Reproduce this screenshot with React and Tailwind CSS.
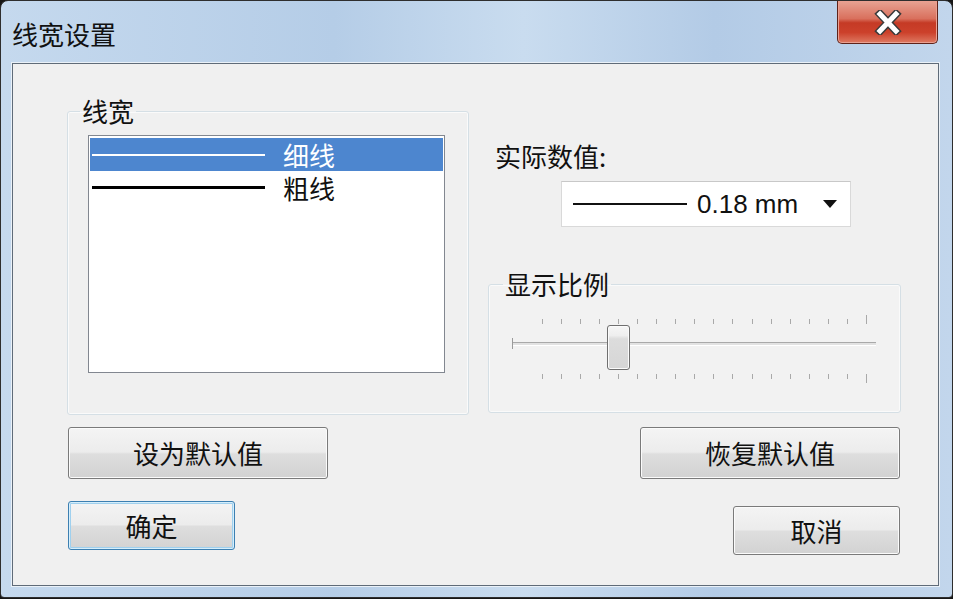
import React from "react";

const cjk = { fontFamily: '"Noto Sans CJK SC", "Noto Sans", sans-serif' };

function Btn({ children, className = "", focused = false }) {
  return (
    <div
      className={
        "flex items-center justify-center rounded-[3px] border text-[26px] leading-none text-[#111] bg-[linear-gradient(to_bottom,#f4f4f4_0%,#ececec_48%,#dedede_52%,#d2d2d2_100%)] " +
        (focused
          ? "border-[#3c7fb1] shadow-[inset_0_0_0_1px_#d6eefb,inset_0_0_0_2px_#9fd0ee]"
          : "border-[#7a7a7a] shadow-[inset_0_0_0_1px_#fbfbfb]") +
        " " +
        className
      }
      style={cjk}
    >
      {children}
    </div>
  );
}

function Ticks({ top }) {
  const n = 18;
  return (
    <div
      className={
        "flex justify-between pl-[30px] pr-[9px] " +
        (top ? "h-[10px] items-end" : "h-[9px] items-start")
      }
    >
      {Array.from({ length: n }).map((_, i) => (
        <div
          key={i}
          className={
            "w-px bg-[#a9a9a9] " + (i === n - 1 ? "h-[9px]" : "h-[5px]")
          }
        />
      ))}
    </div>
  );
}

export default function App() {
  return (
    <div className="w-[953px] h-[599px] bg-[#161616] overflow-hidden">
      <div className="w-[953px] h-[598px] flex flex-col border border-[#2e2e2e] rounded-t-[8px] rounded-b-[4px] overflow-hidden bg-[linear-gradient(to_right,#c5d9ee_0%,#b5cde7_35%,#c9dcef_55%,#b3cbe6_75%,#c2d6ec_100%)]">
        {/* Title bar */}
        <div className="h-[62px] flex items-start justify-between shrink-0">
          <div
            className="pl-[11px] pt-[19px] text-[26px] leading-[28px] text-[#111]"
            style={cjk}
          >
            线宽设置
          </div>
          <div className="mr-[14px] w-[101px] h-[43px] rounded-b-[5px] border border-t-0 border-[#5e2219] flex items-center justify-center bg-[linear-gradient(to_bottom,#e8a393_0%,#d9705d_42%,#c53a25_52%,#cc412b_75%,#de7a63_100%)] shadow-[inset_0_0_0_1px_#eaa091]">
            <svg width="28" height="25" viewBox="0 0 28 25">
              <path
                d="M6 4 L22 21 M22 4 L6 21"
                stroke="#3a3a3a"
                strokeWidth="8"
                strokeLinecap="square"
                fill="none"
              />
              <path
                d="M6 4 L22 21 M22 4 L6 21"
                stroke="#ffffff"
                strokeWidth="5"
                strokeLinecap="square"
                fill="none"
              />
            </svg>
          </div>
        </div>

        {/* Client area */}
        <div className="ml-[11px] mr-[13px] h-[523px] shrink-0 border border-[#5f6b78] bg-[#f0f0f0] shadow-[0_0_0_1px_#eaf1f8] flex flex-col">
          {/* top section */}
          <div className="flex items-start pl-[54px] pt-[33px]">
            {/* left group */}
            <fieldset className="w-[402px] border border-[#d5dfe5] rounded-[3px] p-0 m-0 shadow-[inset_0_0_0_1px_#fafafa]">
              <legend
                className="ml-[12px] px-[2px] text-[26px] leading-[28px] text-[#111]"
                style={cjk}
              >
                线宽
              </legend>
              <div className="pt-[10px] pl-[20px] pb-[41px]">
                <div className="w-[357px] h-[238px] border border-[#828790] bg-white pt-[2px] px-[1px]">
                  <div className="h-[33px] flex items-center pl-[2px] bg-[#4d86cf]">
                    <div className="w-[173px] h-[2px] bg-white" />
                    <span
                      className="ml-[18px] text-[26px] leading-[28px] text-white"
                      style={cjk}
                    >
                      细线
                    </span>
                  </div>
                  <div className="h-[33px] flex items-center pl-[2px]">
                    <div className="w-[173px] h-[3px] bg-black" />
                    <span
                      className="ml-[18px] text-[26px] leading-[28px] text-[#111]"
                      style={cjk}
                    >
                      粗线
                    </span>
                  </div>
                </div>
              </div>
            </fieldset>

            {/* right column */}
            <div className="ml-[19px] w-[413px] flex flex-col">
              <div
                className="mt-[45px] ml-[7px] text-[26px] leading-[28px] text-[#111]"
                style={cjk}
              >
                实际数值:
              </div>
              <div className="mt-[11px] ml-[73px] w-[290px] h-[46px] bg-white border border-[#d9d9d9] border-t-[#c8c8c8] flex items-center pl-[11px]">
                <div className="w-[114px] h-[2px] bg-[#111]" />
                <span
                  className="ml-[10px] text-[26px] leading-none text-[#111]"
                  style={{ fontFamily: '"Liberation Sans", Arial, sans-serif' }}
                >
                  0.18 mm
                </span>
                <svg
                  className="ml-[25px]"
                  width="14"
                  height="8"
                  viewBox="0 0 14 8"
                >
                  <polygon points="0,0 14,0 7,8" fill="#111" />
                </svg>
              </div>

              <fieldset className="mt-[43px] w-[413px] border border-[#d5dfe5] rounded-[3px] p-0 m-0 shadow-[inset_0_0_0_1px_#fafafa] bg-[#f2f2f2]">
                <legend
                  className="ml-[14px] px-[2px] text-[26px] leading-[28px] text-[#111]"
                  style={cjk}
                >
                  显示比例
                </legend>
                <div className="pt-[16px] pl-[23px] pr-[24px] pb-[29px]">
                  <div className="relative w-[364px] flex flex-col">
                    <Ticks top />
                    <div className="mt-[18px] h-[4px] relative border-t border-[#a9a9a9] bg-[#e2e2e2] border-b border-b-white">
                      <div className="absolute left-0 -top-[5px] w-px h-[11px] bg-[#9a9a9a]" />
                    </div>
                    <div className="mt-[28px]">
                      <Ticks />
                    </div>
                    <div className="absolute left-[95px] top-[11px] w-[23px] h-[45px] rounded-[3px] border border-[#6f6f6f] bg-[linear-gradient(to_bottom,#f6f6f6_0%,#eeeeee_22%,#dcdcdc_30%,#d6d6d6_100%)] shadow-[inset_0_0_0_1px_#fbfbfb]" />
                  </div>
                </div>
              </fieldset>
            </div>
          </div>

          {/* buttons row 1 */}
          <div className="mt-[12px] flex justify-between pl-[55px] pr-[38px]">
            <Btn className="w-[260px] h-[52px]">设为默认值</Btn>
            <Btn className="w-[260px] h-[52px]">恢复默认值</Btn>
          </div>

          {/* buttons row 2 */}
          <div className="mt-[22px] flex justify-between items-start pl-[55px] pr-[38px]">
            <Btn className="w-[167px] h-[49px]" focused>
              确定
            </Btn>
            <Btn className="mt-[5px] w-[167px] h-[49px]">取消</Btn>
          </div>
        </div>
      </div>
    </div>
  );
}
